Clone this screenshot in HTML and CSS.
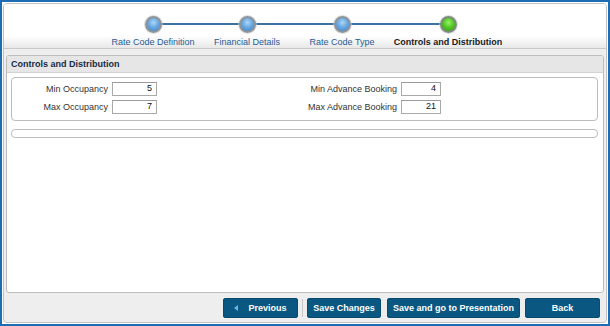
FILE: index.html
```html
<!DOCTYPE html>
<html>
<head>
<meta charset="utf-8">
<link rel="stylesheet" href="styles.css">
</head>
<body>
<div class="frame">
  <div class="window">
    <div class="header">
      <div class="steps">
        <div class="step s1"><span class="dot"></span><span class="step-label">Rate Code Definition</span></div>
        <div class="step s2"><span class="dot"></span><span class="step-label">Financial Details</span></div>
        <div class="step s3"><span class="dot"></span><span class="step-label">Rate Code Type</span></div>
        <div class="step s4 current"><span class="dot"></span><span class="step-label">Controls and Distribution</span></div>
      </div>
    </div>
    <div class="content">
      <div class="panel">
        <div class="panel-title">Controls and Distribution</div>
        <div class="panel-body">
          <div class="fieldset">
            <label class="lbl">Min Occupancy</label>
            <div class="inp w45">5</div>
            <label class="lbl">Min Advance Booking</label>
            <div class="inp w40">4</div>
            <label class="lbl">Max Occupancy</label>
            <div class="inp w45">7</div>
            <label class="lbl">Max Advance Booking</label>
            <div class="inp w40">21</div>
          </div>
          <div class="bar"></div>
        </div>
      </div>
      <div class="footer">
        <button class="btn b-prev"><span class="tri"></span>Previous</button>
        <span class="sep"></span>
        <button class="btn b-save">Save Changes</button>
        <button class="btn b-go">Save and go to Presentation</button>
        <button class="btn b-back">Back</button>
      </div>
    </div>
  </div>
</div>
</body>
</html>
```

FILE: styles.css
```css
html, body {
  margin: 0;
  padding: 0;
  background: #fff;
}
body {
  font-family: "Liberation Sans", Arial, sans-serif;
  font-size: 9px;
}
.frame {
  width: 610px;
  height: 326px;
  box-sizing: border-box;
  border: 2px solid #1d6db4;
  padding: 1px;
  background: #fff;
}
.window {
  height: 100%;
  box-sizing: border-box;
  border: 1px solid #c2c2c2;
  border-radius: 4px;
  background: #eeeeee;
  display: flex;
  flex-direction: column;
  overflow: hidden;
}
.header {
  flex: none;
  background: linear-gradient(#ffffff 0%, #ffffff 72%, #e8e8e8 100%);
  border-bottom: 1px solid #c9c9c9;
  padding: 12px 0 0 102px;
  box-sizing: content-box;
  height: 32px;
}
.steps {
  display: flex;
}
.step {
  position: relative;
  display: flex;
  flex-direction: column;
  align-items: center;
}
.s1 { width: 94px; }
.s2 { width: 94px; }
.s3 { width: 96px; }
.s4 { width: 116px; }
.step::before,
.step::after {
  content: "";
  position: absolute;
  top: 7px;
  height: 2px;
  background: #3b72a3;
}
.step::before { left: 0; right: 50%; }
.step::after { left: 50%; right: 0; }
.s1::before { display: none; }
.s4::after { display: none; }
.dot {
  position: relative;
  z-index: 1;
  width: 17px;
  height: 17px;
  box-sizing: border-box;
  border-radius: 50%;
  border: 2px solid #8f9499;
  background: radial-gradient(circle at 50% 35%, #b0d6f5 0%, #6aaae2 45%, #3c82c8 100%);
  box-shadow: 0 0 0 1px rgba(200, 200, 200, 0.6);
}
.current .dot {
  border-color: #7d8a7d;
  background: radial-gradient(circle at 50% 35%, #9cf06a 0%, #55c927 45%, #2f9a10 100%);
}
.step-label {
  margin-top: 4px;
  line-height: 10px;
  color: #1f5b94;
  white-space: nowrap;
}
.current .step-label {
  color: #1a1a1a;
  font-weight: bold;
}
.content {
  flex: 1;
  display: flex;
  flex-direction: column;
  padding: 6px 2px 0 2px;
}
.panel {
  flex: 1;
  display: flex;
  flex-direction: column;
  border: 1px solid #bdbdbd;
  border-radius: 3px;
  background: #fff;
  overflow: hidden;
}
.panel-title {
  height: 16px;
  line-height: 16px;
  padding-left: 4px;
  background: #e6e6e6;
  border-bottom: 1px solid #d2d2d2;
  font-weight: bold;
  color: #152a45;
}
.panel-body {
  padding: 4px 5px 0 4px;
}
.fieldset {
  border: 1px solid #bcbcbc;
  border-radius: 4px;
  padding: 4px 0 6px 0;
  display: grid;
  grid-template-columns: 96px 45px 236px 40px;
  column-gap: 4px;
  row-gap: 4px;
  align-items: center;
}
.lbl {
  text-align: right;
  color: #333333;
  white-space: nowrap;
  line-height: 14px;
}
.inp {
  height: 14px;
  box-sizing: border-box;
  border: 1px solid #a9a9a9;
  border-top-color: #9a9a9a;
  background: #fff;
  text-align: right;
  padding-right: 4px;
  line-height: 11px;
  color: #111;
}
.w45 { width: 45px; }
.w40 { width: 40px; }
.bar {
  margin-top: 8px;
  height: 9px;
  box-sizing: border-box;
  border: 1px solid #bcbcbc;
  border-radius: 4px;
}
.footer {
  display: flex;
  justify-content: flex-end;
  align-items: center;
  padding: 5px 4px 4px 0;
}
.btn {
  height: 20px;
  border: none;
  border-radius: 3px;
  background: #0a5782;
  color: #fff;
  font-family: "Liberation Sans", Arial, sans-serif;
  font-size: 9px;
  font-weight: bold;
  padding: 0;
  display: flex;
  align-items: center;
  justify-content: center;
  box-shadow: inset 0 0 0 1px #084a70;
}
.b-prev { width: 75px; }
.b-save { width: 74px; margin-right: 6px; }
.b-go { width: 133px; margin-right: 5px; }
.b-back { width: 75px; }
.tri {
  width: 0;
  height: 0;
  border-top: 3px solid transparent;
  border-bottom: 3px solid transparent;
  border-right: 4px solid #6fb2e4;
  margin-right: 10px;
}
.sep {
  width: 1px;
  height: 18px;
  background: #c8c8c8;
  margin: 0 4px;
}
```
